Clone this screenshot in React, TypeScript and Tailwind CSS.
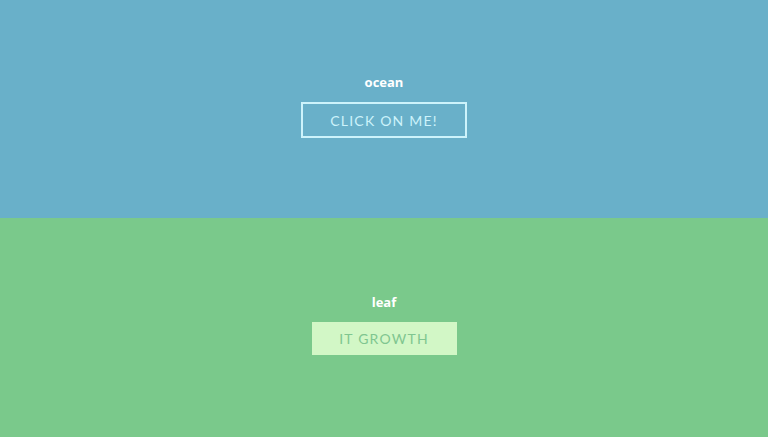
export default function App() {
  return (
    <div className="flex h-[437px] w-[768px] flex-col overflow-hidden">
      <section className="flex h-[218px] flex-col items-center justify-center bg-[#69b0c9] pb-[6px]">
        <h2 className="font-['Open_Sans',sans-serif] text-[13px] font-bold leading-[16px] text-white">ocean</h2>
        <button className="mt-[12px] flex h-[36px] w-[166px] items-center justify-center border-2 border-[#cdf3fb] font-['Lato',sans-serif] text-[14px] uppercase tracking-[1.2px] text-[#cdf3fb]">
          Click on me!
        </button>
      </section>
      <section className="flex h-[219px] flex-col items-center justify-center bg-[#7ac98b] pb-[6px]">
        <h2 className="font-['Open_Sans',sans-serif] text-[13px] font-bold leading-[16px] text-white">leaf</h2>
        <button className="mt-[12px] flex h-[33px] w-[145px] items-center justify-center bg-[#d2f7c6] font-['Lato',sans-serif] text-[14px] uppercase tracking-[1.2px] text-[#7fc690]">
          It growth
        </button>
      </section>
    </div>
  );
}
